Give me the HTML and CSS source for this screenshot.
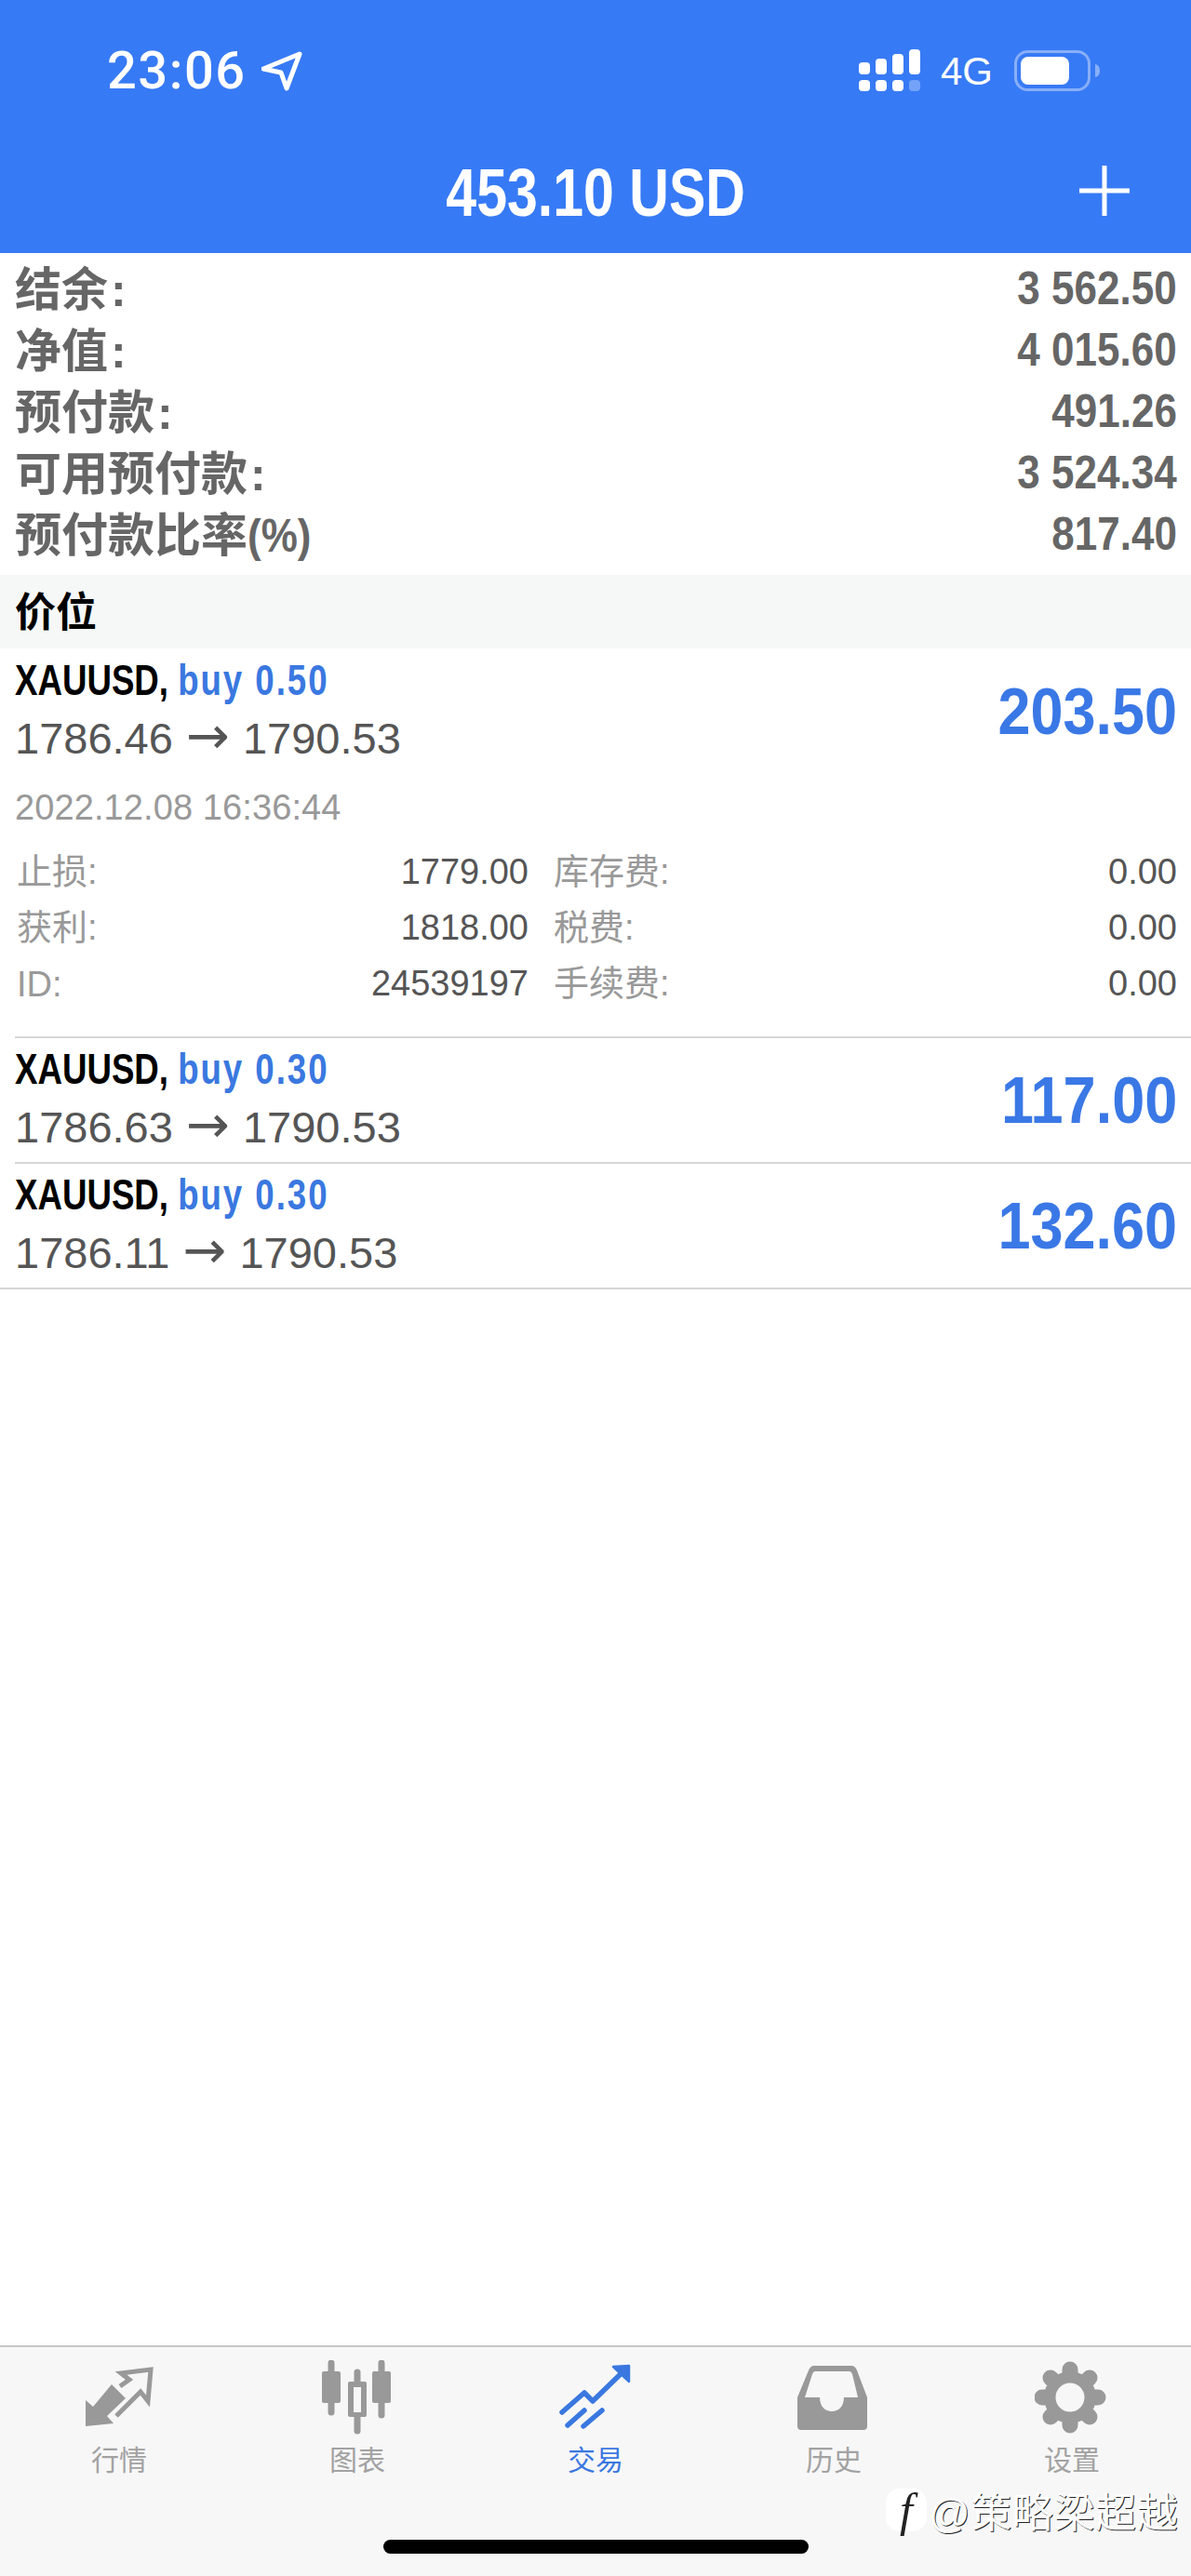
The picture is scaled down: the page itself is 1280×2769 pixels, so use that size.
FILE: index.html
```html
<!DOCTYPE html>
<html lang="zh-CN">
<head>
  <meta charset="UTF-8"/>
  <meta name="viewport" content="width=device-width,initial-scale=1"/>
  <title>交易</title>
  <link rel="stylesheet" href="styles.css">
</head>
<body>

  <div class="app">
    <header class="top">
      <div class="status">
        <span class="time">23:06</span>
        <svg class="loc" width="44" height="44" viewBox="0 0 44 44"><path d="M41 3 L2 19 L21 23 L27 40 Z" fill="none" stroke="#fff" stroke-width="5" stroke-linejoin="round"/></svg>
        <svg class="signal" width="66" height="46" viewBox="0 0 66 46">
          <rect x="0" y="14" width="12" height="13" rx="4" fill="#fff"/>
          <rect x="18" y="10" width="12" height="17" rx="4" fill="#fff"/>
          <rect x="36" y="5" width="12" height="22" rx="4" fill="#fff"/>
          <rect x="54" y="0" width="12" height="27" rx="4" fill="#fff"/>
          <rect x="0" y="33" width="12" height="12" rx="4" fill="#fff"/>
          <rect x="18" y="33" width="12" height="12" rx="4" fill="#fff"/>
          <rect x="36" y="33" width="12" height="12" rx="4" fill="#fff"/>
          <rect x="54" y="33" width="12" height="12" rx="4" fill="#fff" fill-opacity=".3"/>
        </svg>
        <span class="net">4G</span>
        <svg class="battery" width="92" height="44" viewBox="0 0 92 44">
          <rect x="1.5" y="1.5" width="79" height="41" rx="13" fill="none" stroke="#fff" stroke-opacity=".4" stroke-width="3"/>
          <rect x="7" y="7" width="52" height="30" rx="8" fill="#fff"/>
          <path d="M87 15 C91 16 92 19 92 22 C92 25 91 28 87 29 Z" fill="#fff" fill-opacity=".4"/>
        </svg>
      </div>
      <div class="title-row">
        <h1 class="title"><span>453.10 USD</span></h1>
        <svg class="plus" width="56" height="56" viewBox="0 0 56 56"><path d="M28 1 V55 M1 28 H55" stroke="#fff" stroke-width="5"/></svg>
      </div>
    </header>

    <main class="content">
      <section class="summary">
        <div class="sum-row"><span class="sum-label">结余<u>:</u></span><b>3 562.50</b></div>
        <div class="sum-row"><span class="sum-label">净值<u>:</u></span><b>4 015.60</b></div>
        <div class="sum-row"><span class="sum-label">预付款<u>:</u></span><b>491.26</b></div>
        <div class="sum-row"><span class="sum-label">可用预付款<u>:</u></span><b>3 524.34</b></div>
        <div class="sum-row"><span class="sum-label">预付款比率<i>(%)</i></span><b>817.40</b></div>
      </section>

      <h2 class="section-head">价位</h2>

      <section class="trades">
        <div class="trade trade-open">
          <div class="trade-head">
            <div>
              <div class="symbol"><span>XAUUSD, <em>buy 0.50</em></span></div>
              <div class="prices">1786.46 <span class="arrow">→</span> 1790.53</div>
            </div>
            <b class="profit">203.50</b>
          </div>
          <div class="stamp">2022.12.08 16:36:44</div>
          <div class="details">
            <div class="detail"><span class="det-label">止损:</span><span class="val">1779.00</span></div>
            <div class="detail"><span class="det-label">库存费:</span><span class="val">0.00</span></div>
            <div class="detail"><span class="det-label">获利:</span><span class="val">1818.00</span></div>
            <div class="detail"><span class="det-label">税费:</span><span class="val">0.00</span></div>
            <div class="detail"><span class="det-id">ID:</span><span class="val">24539197</span></div>
            <div class="detail"><span class="det-label">手续费:</span><span class="val">0.00</span></div>
          </div>
        </div>
        <div class="trade">
          <div class="trade-head">
            <div>
              <div class="symbol"><span>XAUUSD, <em>buy 0.30</em></span></div>
              <div class="prices">1786.63 <span class="arrow">→</span> 1790.53</div>
            </div>
            <b class="profit">117.00</b>
          </div>
        </div>
        <div class="trade">
          <div class="trade-head">
            <div>
              <div class="symbol"><span>XAUUSD, <em>buy 0.30</em></span></div>
              <div class="prices">1786.11 <span class="arrow">→</span> 1790.53</div>
            </div>
            <b class="profit">132.60</b>
          </div>
        </div>
      </section>
    </main>

    <footer class="tabbar">
      <nav class="tabs">
        <div class="tab">
          <svg width="80" height="80" viewBox="0 0 80 80">
            <path d="M4 43 L12 50 L32 26 L47 41 L27 60 L34 68 L4 71 Z" fill="#999"/>
            <path d="M41 28 L51 21 L42 14 L74 10 L71 44 L63 34 L37 60" fill="none" stroke="#999" stroke-width="5"/>
          </svg>
          <span>行情</span>
        </div>
        <div class="tab">
          <svg width="80" height="80" viewBox="0 0 80 80">
            <path d="M12 3 V56 M40 13 V76 M66 3 V59" stroke="#999" stroke-width="7" stroke-linecap="round"/>
            <rect x="2" y="12" width="20" height="34" rx="2" fill="#999"/>
            <rect x="30" y="23" width="20" height="38" rx="2" fill="#999"/>
            <rect x="36" y="29" width="8" height="27" fill="#f7f7f7"/>
            <rect x="56" y="12" width="20" height="34" rx="2" fill="#999"/>
          </svg>
          <span>图表</span>
        </div>
        <div class="tab active">
          <svg width="80" height="80" viewBox="0 0 80 80">
            <path d="M4 56 L28 35 L37 44 L70 12 M10 70 L28 54 M27 71 L47 54" fill="none" stroke="#3a78e0" stroke-width="5.5" stroke-linecap="round" stroke-linejoin="round"/>
            <path d="M59 7 L76 6 L76 23 Z" fill="#3a78e0" stroke="#3a78e0" stroke-width="2.5" stroke-linejoin="round"/>
          </svg>
          <span>交易</span>
        </div>
        <div class="tab">
          <svg width="80" height="80" viewBox="0 0 80 80">
            <path fill="#999" fill-rule="evenodd" d="M19 6 H59 Q63 6 65 11 L76 40 V71 Q76 75 72 75 H5 Q1 75 1 71 V40 L13 11 Q15 6 19 6 Z M20 12 Q18 12 17 15 L9 40 H25 C25 50 31 55 38 55 C45 55 51 50 51 40 H66 L60 15 Q59 12 57 12 Z"/>
          </svg>
          <span>历史</span>
        </div>
        <div class="tab">
          <svg width="80" height="80" viewBox="0 0 80 80">
            <g stroke="#999" stroke-width="17" stroke-linecap="round">
              <path d="M38 10 V70 M8 40 H68 M17 19 L59 61 M59 19 L17 61"/>
            </g>
            <circle cx="38" cy="40" r="28" fill="#999"/>
            <circle cx="38" cy="40" r="15.5" fill="#f7f7f7"/>
          </svg>
          <span>设置</span>
        </div>
      </nav>
      <div class="home-bar"></div>
      <div class="watermark"><span class="wm-logo">f</span><span class="wm-text">@策略梁超越</span></div>
    </footer>
  </div>

</body>
</html>
```

FILE: styles.css
```css
* { box-sizing:border-box; }
html, body { margin:0; padding:0; }
body { font-family:"Liberation Sans","Noto Sans CJK SC",sans-serif; background:#fff; color:#555; }
.app { width:1280px; height:2769px; display:flex; flex-direction:column; overflow:hidden; }

/* top blue bar */
.top { height:272px; background:#377af5; color:#fff; flex:none; }
.status { height:152px; display:flex; align-items:center; padding:0 98px 0 115px; }
.time { font-family:Roboto,sans-serif; font-weight:500; font-size:56px; letter-spacing:1.5px; }
.loc { margin-left:16px; margin-top:2px; }
.signal { margin-left:auto; }
.net { margin-left:22px; font-size:42px; margin-top:2px; }
.battery { margin-left:23px; }
.title-row { height:110px; display:grid; grid-template-columns:1fr auto 1fr; align-items:center; }
.title { grid-column:2; margin:0; font-size:72px; font-weight:bold; line-height:110px; }
.title span { display:inline-block; transform:scaleX(.82); }
.plus { grid-column:3; justify-self:end; margin-right:65px; margin-top:-4px; }

.content { flex:1; }

/* account summary */
.summary { padding:5px 15px 11px 16px; }
.sum-row { height:66px; display:flex; justify-content:space-between; align-items:center; color:#666; font-size:50px; font-weight:bold; white-space:nowrap; }
.sum-row b { display:inline-block; transform:scaleX(.88); transform-origin:right center; }
.sum-row i { display:inline-block; font-style:normal; transform:scaleX(.88); transform-origin:left center; }
.sum-row u { text-decoration:none; margin-left:3px; }
.sum-label { position:relative; top:-3px; }

.section-head { margin:0; height:79px; line-height:82px; padding-left:16px; background:#f6f7f7; color:#000; font-size:44px; font-weight:bold; }

/* open positions */
.trade { margin-left:16px; border-bottom:2px solid #d6d6d6; padding-right:15px; }
.trade:last-child { margin-left:0; padding-left:16px; }
.trade-head { display:flex; justify-content:space-between; align-items:center; padding:1px 0 6px; }
.trade-open .trade-head { padding:2px 0 3px; }
.symbol, .prices { height:63px; line-height:63px; white-space:nowrap; }
.symbol { font-size:47px; font-weight:bold; color:#000; }
.symbol span { display:inline-block; transform:scaleX(.78); transform-origin:left center; }
.symbol em { font-style:normal; color:#3a78e0; letter-spacing:2.5px; }
.prices { font-size:47px; color:#555; }
.arrow { font-family:"DejaVu Sans",sans-serif; font-size:56px; line-height:40px; margin:0 1px; }
.profit { display:inline-block; margin-top:5px; font-size:70px; color:#3a78e6; transform:scaleX(.9); transform-origin:right center; }
.stamp { margin-top:10px; height:60px; line-height:60px; font-size:38px; letter-spacing:.1px; color:#999; }
.details { margin-top:9px; padding-bottom:27px; display:grid; grid-template-columns:552px 1fr; column-gap:25px; }
.detail { height:60px; display:flex; justify-content:space-between; align-items:center; font-size:38px; color:#999; padding-left:2px; }
.det-label { position:relative; top:-4px; }
.det-id { position:relative; top:1px; }
.detail .val { color:#555; }

/* bottom tabs */
.tabbar { position:relative; flex:none; height:248px; background:#f7f7f7; border-top:2px solid #c6c6c6; }
.tabs { display:grid; grid-template-columns:repeat(5,1fr); padding-top:14px; }
.tab { display:flex; flex-direction:column; align-items:center; gap:8px; color:#a2a2a2; font-size:30px; line-height:40px; }
.tab svg { display:block; }
.tab.active { color:#3a78e0; }
.home-bar { width:457px; height:15px; margin:65px auto 0; background:#000; border-radius:8px; }

.watermark { position:absolute; left:952px; top:150px; display:flex; align-items:center; height:50px; }
.wm-logo { position:relative; width:44px; height:46px; border-radius:15px; background:#fff; color:#222; font-family:"Liberation Serif",serif; font-style:italic; font-size:50px; line-height:46px; text-align:center; }
.wm-logo::after { content:""; position:absolute; left:8px; bottom:-5px; width:12px; height:12px; background:#fff; transform:rotate(45deg); z-index:-1; }
.wm-text { margin-left:2px; font-family:"Liberation Sans","Noto Sans CJK SC",sans-serif; font-size:44px; letter-spacing:.6px; color:#fff; text-shadow:1px 1px 0 #222; white-space:nowrap; }
```
